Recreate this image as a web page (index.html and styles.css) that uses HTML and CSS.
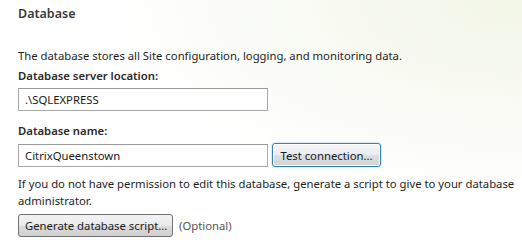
FILE: index.html
```html
<!DOCTYPE html>
<html>
<head>
<meta charset="utf-8">
<link rel="stylesheet" href="styles.css">
</head>
<body>
<div class="page">
  <h1 class="title">Database</h1>
  <p class="desc">The database stores all Site configuration, logging, and monitoring data.</p>
  <label class="label">Database server location:</label>
  <div class="row">
    <div class="field">.\SQLEXPRESS</div>
  </div>
  <label class="label label2">Database name:</label>
  <div class="row row2">
    <div class="field">CitrixQueenstown</div>
    <button class="btn btn-focus">Test connection...</button>
  </div>
  <p class="note">If you do not have permission to edit this database, generate a script to give to your database administrator.</p>
  <div class="row row3">
    <button class="btn btn-gen">Generate database script...</button>
    <span class="optional">(Optional)</span>
  </div>
</div>
</body>
</html>
```

FILE: styles.css
```css
html, body {
  margin: 0;
  padding: 0;
}
body {
  width: 522px;
  height: 250px;
  overflow: hidden;
  background: radial-gradient(ellipse 420px 200px at 100% 0%, #f2f6e6 0%, #f8faf2 45%, #ffffff 100%);
  font-family: "Noto Sans", "Open Sans", sans-serif;
  font-size: 11.3px;
  color: #1e1e1e;
}
.page {
  padding: 5px 0 0 18px;
  display: flex;
  flex-direction: column;
  align-items: flex-start;
}
.title {
  margin: 0;
  font-size: 12.5px;
  font-weight: 600;
  line-height: 18px;
  color: #3a3a3a;
}
.desc {
  margin: 24px 0 0 0;
  line-height: 18px;
}
.label {
  margin-top: 2px;
  font-weight: 600;
  line-height: 18px;
  color: #2a2a2a;
}
.label2 {
  margin-top: 11px;
}
.row {
  display: flex;
  align-items: center;
  gap: 4px;
  margin-top: 3px;
}
.field {
  box-sizing: border-box;
  width: 250px;
  height: 23px;
  border: 1px solid #a9a9a9;
  border-top-color: #9a9a9a;
  background: #fff;
  padding: 0 6px;
  line-height: 21px;
  color: #1a1a1a;
  white-space: nowrap;
}
.btn {
  box-sizing: border-box;
  height: 23px;
  font-family: inherit;
  font-size: 11.3px;
  color: #1a1a1a;
  border: 1px solid #707070;
  border-radius: 3px;
  background: linear-gradient(#f2f2f2 0%, #ebebeb 50%, #dddddd 51%, #cfcfcf 100%);
  padding: 0 6px;
  line-height: 21px;
  white-space: nowrap;
}
.btn-focus {
  width: 109px;
  height: 24px;
  border-color: #3c7fb1;
  box-shadow: 0 0 2px rgba(60, 127, 177, 0.6), inset 0 0 0 1px #fff;
  background: linear-gradient(#f4f6f8 0%, #eaedf0 50%, #dde1e4 51%, #d0d4d7 100%);
}
.btn-gen {
  width: 155px;
}
.row2 {
  margin-top: 3px;
}
.note {
  margin: 8px 0 0 0;
  width: 504px;
  line-height: 17px;
}
.row3 {
  margin-top: 5px;
  gap: 6px;
}
.optional {
  color: #555;
}
```
